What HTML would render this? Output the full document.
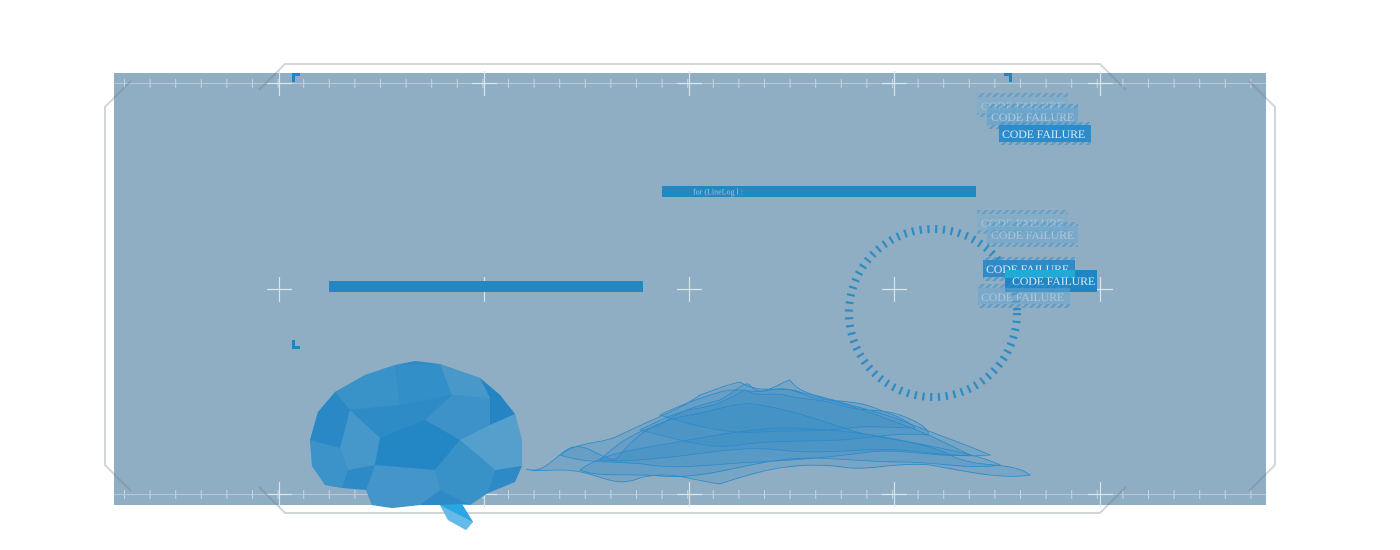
<!DOCTYPE html>
<html><head><meta charset="utf-8"><style>
html,body{margin:0;padding:0;background:#fff;width:1400px;height:550px;overflow:hidden}
svg{display:block}
.t{font-family:"Liberation Serif",serif;font-size:12px;letter-spacing:-0.2px}
</style></head><body>
<svg width="1400" height="550" viewBox="0 0 1400 550" xmlns="http://www.w3.org/2000/svg">
<defs>
<pattern id="tk" x="124" y="0" width="25.6" height="550" patternUnits="userSpaceOnUse">
<line x1="0.5" y1="79" x2="0.5" y2="88" stroke="#c9d7e2" stroke-width="1"/>
<line x1="0.5" y1="490" x2="0.5" y2="499" stroke="#c9d7e2" stroke-width="1"/>
</pattern>
<pattern id="hat" width="5" height="5" patternUnits="userSpaceOnUse" patternTransform="rotate(45)">
<rect width="2.5" height="5" fill="#3a92cc"/>
</pattern>
</defs>
<rect x="114" y="73" width="1152" height="432" fill="#8fadc3"/>
<rect x="114" y="73" width="1152" height="432" fill="url(#tk)"/>
<line x1="114" y1="83.5" x2="1266" y2="83.5" stroke="#b8cad8" stroke-width="1"/>
<line x1="114" y1="494.5" x2="1266" y2="494.5" stroke="#b8cad8" stroke-width="1"/>
<g stroke="#dbe5ec" stroke-width="1.2">
<path d="M267 83.5h25M279.5 71v25M472 83.5h25M484.5 71v25M677 83.5h25M689.5 71v25M882 83.5h25M894.5 71v25M1088 83.5h25M1100.5 71v25"/>
<path d="M267 289.5h25M279.5 277v25M472 289.5h25M484.5 277v25M677 289.5h25M689.5 277v25M882 289.5h25M894.5 277v25M1088 289.5h25M1100.5 277v25"/>
<path d="M267 494.5h25M279.5 482v25M472 494.5h25M484.5 482v25M677 494.5h25M689.5 482v25M882 494.5h25M894.5 482v25M1088 494.5h25M1100.5 482v25"/>
</g>
<g fill="none" stroke="rgba(110,120,130,0.3)" stroke-width="2" stroke-linejoin="round">
<path d="M259 90L285 64H1100L1126 90"/>
<path d="M259 487L285 513H1100L1126 487"/>
<path d="M131 81L105 107V465L131 491"/>
<path d="M1249 81L1275 107V465L1249 491"/>
</g>
<g fill="#1e86c5">
<path d="M292 73h8v3h-5v6h-3z"/>
<path d="M1004 73h8v9h-3v-6h-5z"/>
<path d="M292 340h3v6h5v3h-8z"/>
</g>
<rect x="662" y="186" width="314" height="11" fill="#2387c3"/>
<text x="693" y="194.5" font-family="Liberation Serif,serif" font-size="8" fill="#9cc3dc">for (LineLog l :</text>
<rect x="329" y="281" width="314" height="11" fill="#2387c3"/>
<circle cx="933" cy="313" r="84" fill="none" stroke="#2387c3" stroke-width="8" stroke-dasharray="2.2 5.6" opacity="0.9"/>
<g class="t">
<g opacity="0.45"><rect x="977" y="93" width="91" height="24" fill="url(#hat)"/><rect x="977" y="97" width="91" height="16" fill="#7aaed0"/><text x="981" y="110" fill="#c8dcea">CODE FAILURE</text></g>
<g opacity="0.6"><rect x="987" y="104" width="91" height="25" fill="url(#hat)"/><rect x="987" y="108" width="91" height="17" fill="#5ea2cf"/><text x="991" y="121" fill="#c8dcea">CODE FAILURE</text></g>
<g><rect x="999" y="122" width="92" height="23" fill="url(#hat)" opacity="0.6"/><rect x="999" y="125" width="92" height="17" fill="#2c8bc8"/><text x="1002" y="138" fill="#d7e7f2">CODE FAILURE</text></g>
<g opacity="0.45"><rect x="977" y="210" width="91" height="24" fill="url(#hat)"/><rect x="977" y="214" width="91" height="16" fill="#7aaed0"/><text x="981" y="227" fill="#c8dcea">CODE FAILURE</text></g>
<g opacity="0.5"><rect x="987" y="222" width="91" height="25" fill="url(#hat)"/><rect x="987" y="226" width="91" height="17" fill="#6aa7cf"/><text x="991" y="239" fill="#c8dcea">CODE FAILURE</text></g>
<g><rect x="983" y="257" width="92" height="24" fill="url(#hat)" opacity="0.6"/><rect x="983" y="260" width="92" height="17" fill="#2c8bc8"/><text x="986" y="273" fill="#d7e7f2">CODE FAILURE</text></g>
<g><rect x="1005" y="270" width="92" height="22" fill="#1e86c5"/><rect x="1005" y="270" width="70" height="8" fill="#22a9d6"/><text x="1012" y="285" fill="#d7e7f2">CODE FAILURE</text></g>
<g opacity="0.55"><rect x="978" y="284" width="92" height="24" fill="url(#hat)"/><rect x="978" y="288" width="92" height="16" fill="#6aa7cf"/><text x="981" y="301" fill="#c8dcea">CODE FAILURE</text></g>
</g>
<g fill="rgba(40,135,200,0.22)" stroke="#2b8bcc" stroke-width="0.8">
<path d="M526 469C545 475 555 455 570 448C590 440 610 470 620 455C640 430 660 420 690 415C720 410 740 400 760 405C790 410 820 420 850 430C880 440 920 440 950 455C980 470 1010 460 1030 475C1000 480 960 470 930 465C900 462 870 470 850 468C800 460 760 470 720 484C690 480 670 470 640 478C610 490 600 470 560 470C545 470 535 472 526 469Z"/>
<path d="M560 455C580 440 600 445 620 435C650 420 680 410 700 395C715 390 725 385 740 382C760 395 780 385 800 392C830 400 860 408 890 420C920 430 950 445 970 455C940 458 900 448 870 452C840 456 800 460 760 462C720 463 680 470 650 465C620 460 590 465 560 455Z"/>
<path d="M600 460C620 440 640 430 660 425C680 410 700 405 720 400C735 392 745 380 750 385C760 400 780 382 790 380C800 395 820 395 840 402C860 408 880 412 900 420C930 432 960 442 990 455C960 458 930 452 900 450C860 448 820 455 780 450C740 445 700 455 660 458C640 460 620 462 600 460Z"/>
<path d="M640 430C660 420 680 410 700 408C720 405 735 395 745 390C760 398 770 392 785 395C800 400 820 398 840 405C860 412 880 408 900 415C920 422 930 430 928 435C900 432 870 438 840 440C800 442 770 440 740 445C710 450 680 440 640 430Z"/>
<path d="M580 470C600 455 630 450 660 445C700 438 740 430 780 428C820 428 860 432 900 440C940 448 980 455 1000 465C970 470 940 462 900 462C860 462 820 455 780 460C740 465 700 480 660 476C630 473 600 478 580 470Z"/>
<path d="M660 415C680 405 700 398 720 392C740 386 755 395 770 390C790 385 800 395 815 398C835 402 855 400 875 408C890 414 905 418 915 428C890 428 870 425 850 428C820 432 790 430 760 432C730 434 700 428 660 415Z"/>
</g>
<g>
<path d="M310 440L318 412L335 392L365 375L395 365L415 361L440 364L480 378L500 395L515 414L522 440L522 466L515 482L488 493L470 505L462 504L473 522L466 530L448 520L440 505L420 505L392 508L372 505L366 490L342 488L325 485L312 466Z" fill="#2e8ac6"/>
<g opacity="0.9">
<path d="M335 392L365 375L395 365L400 405L350 410Z" fill="#3b93c9"/>
<path d="M395 365L440 364L452 395L400 405Z" fill="#3490c9"/>
<path d="M440 364L480 378L490 398L452 395Z" fill="#4c9acb"/>
<path d="M480 378L500 395L515 414L490 425L490 398Z" fill="#2584c4"/>
<path d="M452 395L490 398L490 425L460 440L425 420Z" fill="#3f95ca"/>
<path d="M400 405L452 395L425 420L380 438L350 410Z" fill="#2f8cc7"/>
<path d="M310 440L318 412L335 392L350 410L340 448Z" fill="#2a88c6"/>
<path d="M340 448L350 410L380 438L375 465L348 470Z" fill="#4a9acb"/>
<path d="M380 438L425 420L460 440L435 470L375 465Z" fill="#2286c5"/>
<path d="M490 425L515 414L522 440L522 466L495 470L460 440Z" fill="#5aa2cd"/>
<path d="M460 440L495 470L488 493L470 505L440 490L435 470Z" fill="#3a93c9"/>
<path d="M375 465L435 470L440 490L420 505L392 508L372 505L366 490Z" fill="#4797ca"/>
<path d="M312 466L310 440L340 448L348 470L342 488L325 485Z" fill="#3d95ca"/>
<path d="M440 505L470 505L462 504L473 522L466 530L448 520Z" fill="#6bc0ee"/>
<path d="M440 505L462 504L473 522Z" fill="#2aaae6"/>
</g>
</g>
</svg>
</body></html>
